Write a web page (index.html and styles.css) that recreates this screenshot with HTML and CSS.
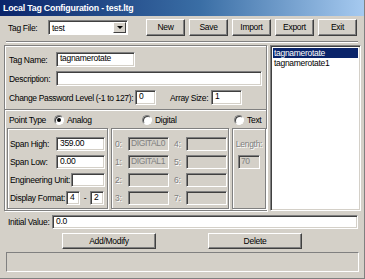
FILE: index.html
```html
<!DOCTYPE html>
<html lang="en">
<head>
    <meta charset="UTF-8">
    <title>Local Tag Configuration</title>
    <link rel="stylesheet" href="styles.css">
</head>
<body>
<div class="window">
    <div class="titlebar">Local Tag Configuration - test.ltg</div>

    <div class="toolbar">
        <span class="lbl w-file">Tag File:</span>
        <div class="combo">
            <span class="combo-text">test</span>
            <span class="combo-btn"><span class="arrow"></span></span>
        </div>
        <div class="btns">
            <div class="btn">New</div>
            <div class="btn">Save</div>
            <div class="btn">Import</div>
            <div class="btn">Export</div>
            <div class="btn">Exit</div>
        </div>
    </div>

    <div class="sep"></div>

    <div class="main">
        <div class="panel">
            <div class="upper">
                <div class="row">
                    <span class="lbl w-name">Tag Name:</span>
                    <div class="field f-name">tagnamerotate</div>
                </div>
                <div class="row">
                    <span class="lbl w-name">Description:</span>
                    <div class="field f-desc"></div>
                </div>
                <div class="row">
                    <span class="lbl w-pw">Change Password Level (-1 to 127):</span>
                    <div class="field f-pw">0</div>
                    <span class="lbl w-arr">Array Size:</span>
                    <div class="field f-arr">1</div>
                </div>
            </div>

            <div class="ptype">
                <span class="lbl w-pt">Point Type</span>
                <span class="radio r-analog"><span class="dot on"></span>Analog</span>
                <span class="radio r-digital"><span class="dot"></span>Digital</span>
                <span class="radio r-text"><span class="dot"></span>Text</span>
            </div>

            <div class="groups">
                <div class="grp g-analog">
                    <div class="grow">
                        <span class="lbl w-span">Span High:</span>
                        <div class="field f-span">359.00</div>
                    </div>
                    <div class="grow">
                        <span class="lbl w-span">Span Low:</span>
                        <div class="field f-span">0.00</div>
                    </div>
                    <div class="grow">
                        <span class="lbl w-eng">Engineering Unit:</span>
                        <div class="field f-eng"></div>
                    </div>
                    <div class="grow">
                        <span class="lbl w-disp">Display Format:</span>
                        <div class="field f-small">4</div>
                        <span class="dash">-</span>
                        <div class="field f-small">2</div>
                    </div>
                </div>

                <div class="grp g-digital">
                    <div class="grow">
                        <span class="lbl off w-dn">0:</span>
                        <div class="field dis f-dig">DIGITAL0</div>
                        <span class="lbl off w-dn2">4:</span>
                        <div class="field dis f-dig"></div>
                    </div>
                    <div class="grow">
                        <span class="lbl off w-dn">1:</span>
                        <div class="field dis f-dig">DIGITAL1</div>
                        <span class="lbl off w-dn2">5:</span>
                        <div class="field dis f-dig"></div>
                    </div>
                    <div class="grow">
                        <span class="lbl off w-dn">2:</span>
                        <div class="field dis f-dig"></div>
                        <span class="lbl off w-dn2">6:</span>
                        <div class="field dis f-dig"></div>
                    </div>
                    <div class="grow">
                        <span class="lbl off w-dn">3:</span>
                        <div class="field dis f-dig"></div>
                        <span class="lbl off w-dn2">7:</span>
                        <div class="field dis f-dig"></div>
                    </div>
                </div>

                <div class="grp g-length">
                    <div class="grow">
                        <span class="lbl off">Length:</span>
                    </div>
                    <div class="grow">
                        <div class="field dis f-len">70</div>
                    </div>
                </div>
            </div>
        </div>

        <div class="list">
            <div class="item sel">tagnamerotate</div>
            <div class="item">tagnamerotate1</div>
        </div>
    </div>

    <div class="initial">
        <span class="lbl w-init">Initial Value:</span>
        <div class="field f-init">0.0</div>
    </div>

    <div class="actions">
        <div class="btn b-add">Add/Modify</div>
        <div class="btn b-del">Delete</div>
    </div>

    <div class="status"></div>
</div>
</body>
</html>
```

FILE: styles.css
```css
body {
    margin: 0;
    background-color: #d4d0c8;
    font-family: "Liberation Sans Narrow", "Liberation Sans", Arial, sans-serif;
    font-size: 8.5px;
    letter-spacing: -0.3px;
    color: #000;
}

.window {
    width: 365px;
    height: 279px;
    overflow: hidden;
    box-sizing: border-box;
    border-right: 1px solid #808080;
    border-bottom: 1px solid #808080;
}

.titlebar {
    height: 16px;
    line-height: 16px;
    padding-left: 3px;
    background: linear-gradient(to right, #0a246a, #3a6ea5 55%, #a6caf0);
    color: white;
    font-weight: bold;
    font-size: 8.8px;
    letter-spacing: -0.2px;
}

.lbl {
    white-space: nowrap;
    flex: none;
}

.lbl.off {
    color: #808080;
    text-shadow: 1px 1px 0 #fff;
}

/* sunken text box */
.field {
    box-sizing: border-box;
    height: 14px;
    line-height: 11px;
    padding-left: 3px;
    background-color: white;
    border: 1px solid;
    border-color: #808080 #fff #fff #808080;
    box-shadow: inset 1px 1px 0 #404040, inset -1px -1px 0 #d4d0c8;
    white-space: nowrap;
    overflow: hidden;
    flex: none;
}

.field.dis {
    background-color: #d4d0c8;
    color: #808080;
    padding-left: 2px;
    letter-spacing: -0.4px;
}

/* raised push button */
.btn {
    box-sizing: border-box;
    height: 17px;
    line-height: 15px;
    text-align: center;
    background-color: #d4d0c8;
    border: 1px solid;
    border-color: #fff #404040 #404040 #fff;
    box-shadow: inset -1px -1px 0 #808080;
}

.toolbar {
    display: flex;
    align-items: center;
    height: 17px;
    margin-top: 3px;
    padding-left: 8px;
}

.w-file {
    width: 40px;
}

.combo {
    box-sizing: border-box;
    width: 80px;
    height: 15px;
    display: flex;
    align-items: center;
    background-color: white;
    border: 1px solid;
    border-color: #808080 #fff #fff #808080;
    box-shadow: inset 1px 1px 0 #404040;
}

.combo-text {
    flex: 1;
    padding-left: 3px;
}

.combo-btn {
    box-sizing: border-box;
    width: 13px;
    height: 11px;
    margin-right: 1px;
    display: flex;
    align-items: center;
    justify-content: center;
    background-color: #d4d0c8;
    border: 1px solid;
    border-color: #fff #404040 #404040 #fff;
}

.arrow {
    width: 0;
    height: 0;
    border-left: 3px solid transparent;
    border-right: 3px solid transparent;
    border-top: 3px solid #000;
}

.btns {
    display: flex;
    gap: 4px;
    margin-left: 18px;
}

.btns .btn {
    width: 39px;
}

.sep {
    margin: 5px 6px 0 6px;
    border-top: 1px solid #808080;
    border-bottom: 1px solid #fff;
}

.main {
    display: flex;
    gap: 3px;
    margin-top: 2px;
    padding-left: 4px;
}

/* etched frames */
.panel,
.grp {
    box-sizing: border-box;
    border: 1px solid #808080;
    box-shadow: 1px 1px 0 #fff, inset 1px 1px 0 #fff;
}

.panel {
    width: 263px;
    height: 166px;
}

.upper {
    display: flex;
    flex-direction: column;
    gap: 4px;
    padding: 6px 0 4px 4px;
    border-bottom: 1px solid #808080;
    box-shadow: 0 1px 0 #fff;
}

.row {
    display: flex;
    align-items: center;
    height: 15px;
}

.row .field {
    height: 15px;
}

.w-name {
    width: 47px;
}

.f-name {
    width: 79px;
}

.f-desc {
    width: 206px;
}

.w-pw {
    width: 126px;
    letter-spacing: -0.35px;
}

.f-pw {
    width: 21px;
}

.w-arr {
    width: 41px;
    margin-left: 14px;
}

.f-arr {
    width: 31px;
}

.ptype {
    display: flex;
    align-items: center;
    height: 17px;
    margin-top: 1px;
    padding-left: 4px;
}

.w-pt {
    width: 45px;
}

.radio {
    display: flex;
    align-items: center;
    gap: 3px;
    flex: none;
}

.r-analog {
    width: 88px;
}

.r-digital {
    width: 92px;
}

.dot {
    box-sizing: border-box;
    width: 10px;
    height: 10px;
    border-radius: 50%;
    background-color: white;
    border: 1px solid;
    border-color: #808080 #fff #fff #808080;
    box-shadow: inset 1px 1px 0 #404040;
    display: flex;
    align-items: center;
    justify-content: center;
}

.dot.on::after {
    content: "";
    width: 4px;
    height: 4px;
    border-radius: 50%;
    background-color: #000;
}

.groups {
    display: flex;
    gap: 3px;
    margin-left: 2px;
}

.grp {
    height: 81px;
    display: flex;
    flex-direction: column;
    gap: 4px;
    padding-top: 8px;
}

.grow {
    display: flex;
    align-items: center;
    height: 14px;
}

.g-analog {
    width: 101px;
    padding-left: 2px;
}

.g-digital {
    width: 118px;
    padding-left: 3px;
}

.g-length {
    width: 34px;
    align-items: center;
}

.w-span {
    width: 46px;
}

.f-span {
    width: 49px;
}

.w-eng {
    width: 61px;
}

.f-eng {
    width: 34px;
}

.w-disp {
    width: 56px;
}

.f-small {
    width: 14px;
}

.dash {
    width: 10px;
    text-align: center;
}

.w-dn {
    width: 13px;
}

.w-dn2 {
    width: 12px;
    margin-left: 5px;
}

.f-dig {
    width: 41px;
}

.f-len {
    width: 22px;
}

.list {
    box-sizing: border-box;
    width: 91px;
    height: 166px;
    padding: 2px;
    background-color: white;
    border: 1px solid;
    border-color: #808080 #fff #fff #808080;
    box-shadow: inset 1px 1px 0 #404040, inset -1px -1px 0 #d4d0c8;
}

.item {
    height: 10px;
    line-height: 10px;
    padding-left: 1px;
}

.item.sel {
    background-color: #0a246a;
    color: white;
}

.initial {
    display: flex;
    align-items: center;
    margin-top: 4px;
    padding-left: 8px;
}

.w-init {
    width: 44px;
}

.f-init {
    width: 306px;
}

.actions {
    display: flex;
    margin-top: 4px;
    padding-left: 62px;
}

.actions .btn {
    width: 94px;
    height: 16px;
    line-height: 14px;
}

.b-del {
    margin-left: 52px;
}

.status {
    box-sizing: border-box;
    height: 20px;
    margin: 3px 5px 0 6px;
    border: 1px solid;
    border-color: #808080 #fff #fff #808080;
}
```
